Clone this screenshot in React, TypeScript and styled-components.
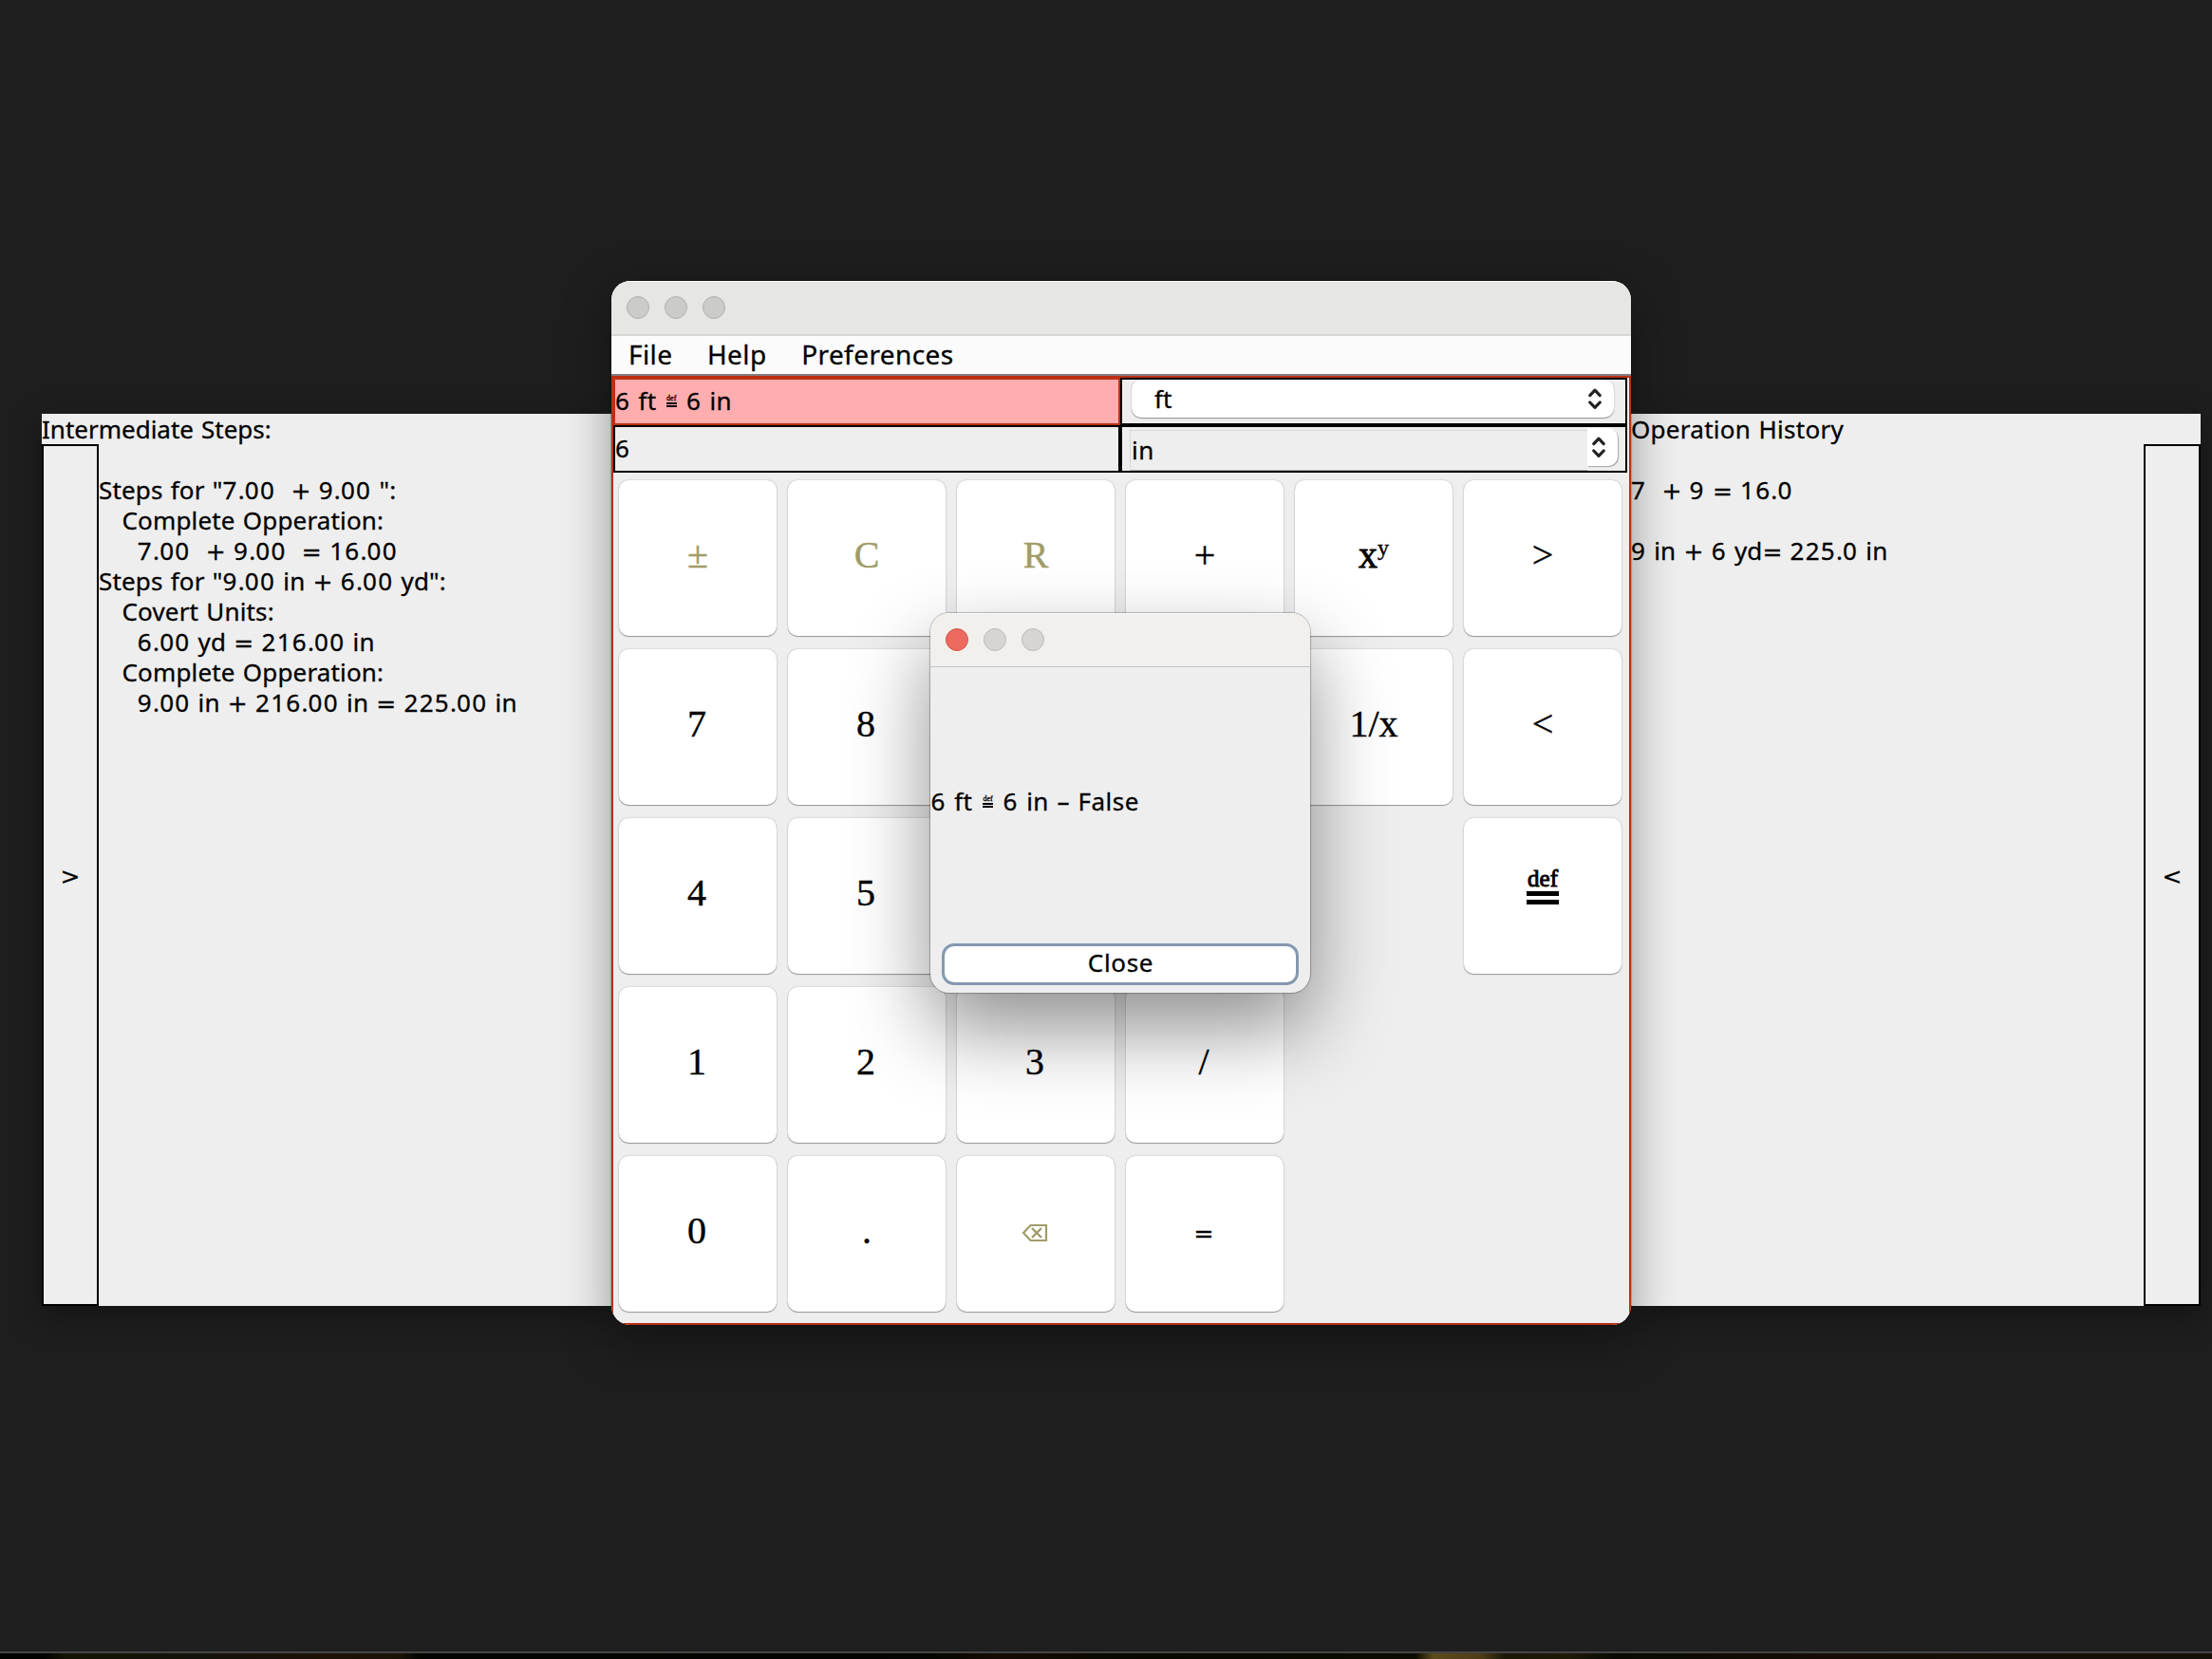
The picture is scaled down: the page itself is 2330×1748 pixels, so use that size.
import React from "react";
import styled, { createGlobalStyle, css } from "styled-components";

const GlobalStyle = createGlobalStyle`
  * { box-sizing: border-box; }
  html, body { margin: 0; padding: 0; background: #1e1e1e; }
  button { font: inherit; margin: 0; padding: 0; color: inherit; }
`;

const sans = `"Noto Sans", "Open Sans", sans-serif`;
const serif = `"Liberation Serif", "Times New Roman", serif`;
const olive = "#a09c68";
const rust = "#bb3114";

/* ---------- text ---------- */

const Label = styled.span<{ $size?: number; $track?: number }>`
  font-family: ${sans};
  font-size: ${(p) => p.$size ?? 26}px;
  line-height: 32px;
  letter-spacing: ${(p) => p.$track ?? 0.16}px;
  word-spacing: 1.25px;
  white-space: pre;
  color: #000;
  -webkit-text-stroke: 0.3px #000;
`;

const Digits = styled.span`
  letter-spacing: 1.25px;
`;

const Operator = styled.span`
  font-family: "DejaVu Sans", sans-serif;
  font-size: 25px;
  line-height: 0;
`;

const DefMark = styled.span<{ $large?: boolean }>`
  display: inline-flex;
  flex-direction: column;
  align-items: stretch;
  font-family: ${serif};
  letter-spacing: 0;
  text-align: center;
  ${(p) =>
    p.$large
      ? css`
          width: 34px;
          margin-bottom: 11px;
          font-size: 25px;
          line-height: 18px;
          -webkit-text-stroke: 0.9px #000;
        `
      : css`
          width: 11px;
          margin: 0 2px;
          font-size: 8px;
          line-height: 6px;
          vertical-align: 10px;
          -webkit-text-stroke: 0.3px #000;
        `}
`;

const DefBar = styled.i<{ $large?: boolean }>`
  height: ${(p) => (p.$large ? 5 : 2)}px;
  margin-top: ${(p) => (p.$large ? 4 : 1)}px;
  background: #000;
`;

const Def = ({ large }: { large?: boolean }) => (
  <DefMark $large={large}>
    def
    <DefBar $large={large} />
    <DefBar $large={large} />
  </DefMark>
);

const Text = ({ children }: { children: string }) => (
  <>
    {children.split(/([0-9]+|[+=<>]|≝)/).map((part, i) => {
      if (part === "≝") return <Def key={i} />;
      if (/^[0-9]+$/.test(part)) return <Digits key={i}>{part}</Digits>;
      if (/^[+=<>]$/.test(part)) return <Operator key={i}>{part}</Operator>;
      return part;
    })}
  </>
);

/* ---------- desktop ---------- */

const Desktop = styled.div`
  position: relative;
  width: 2330px;
  height: 1748px;
  overflow: hidden;
  display: flex;
  flex-direction: column;
  justify-content: flex-end;
  background: #1e1e1e;
`;

const WallpaperEdge = styled.div`
  height: 8px;
  border-top: 2px solid #454545;
  background: linear-gradient(
    90deg,
    #020200 0 2%,
    #151404 3%,
    #14120a 9%,
    #1d1206 15%,
    #1a1407 18%,
    #040500 19%,
    #050601 42%,
    #150c04 45%,
    #070800 52%,
    #0c0c02 64%,
    #5e4b1c 64.8%,
    #4c3c17 67%,
    #1c1808 68%,
    #1d1a08 71%,
    #0a0a03 73%,
    #150d05 82%,
    #151006 100%
  );
`;

const SidePanel = styled.section<{ $x: number }>`
  position: absolute;
  left: ${(p) => p.$x}px;
  top: 436px;
  width: 600px;
  height: 940px;
  display: flex;
  flex-direction: column;
  background: #eee;
  box-shadow: 0 10px 30px rgba(0, 0, 0, 0.35);
`;

const PanelBody = styled.div`
  flex: 1;
  display: flex;
`;

const Lines = styled.div`
  flex: 1;
  display: flex;
  flex-direction: column;
  padding-top: 32px;
`;

const Drawer = styled.button`
  width: 60px;
  display: flex;
  align-items: center;
  justify-content: center;
  border: 2px solid #000;
  background: #eee;
`;

/* ---------- windows ---------- */

const Frame = styled.section<{ $dialog?: boolean }>`
  position: absolute;
  display: flex;
  flex-direction: column;
  overflow: hidden;
  border-radius: 20px;
  background: #eee;
  ${(p) =>
    p.$dialog
      ? css`
          left: 980px;
          top: 646px;
          width: 400px;
          height: 400px;
          box-shadow: 0 0 1px 1px rgba(0, 0, 0, 0.25), 0 38px 84px rgba(0, 0, 0, 0.44);
        `
      : css`
          left: 644px;
          top: 296px;
          width: 1074px;
          height: 1100px;
          box-shadow: 0 0 1px 1px rgba(0, 0, 0, 0.2), 0 16px 50px rgba(0, 0, 0, 0.38);
        `}
`;

const TitleBar = styled.header<{ $dialog?: boolean }>`
  height: ${(p) => (p.$dialog ? 57 : 58)}px;
  flex: none;
  display: flex;
  gap: 16px;
  padding: 16px;
  background: ${(p) => (p.$dialog ? "#f1f0ec" : "#e6e6e4")};
  border-bottom: ${(p) => (p.$dialog ? "1px solid #c4c4c4" : "2px solid #d6d6d4")};
  box-shadow: inset 0 1px 0 #fbfbfa;
`;

const Light = styled.i<{ $tone: "red" | "grey" | "pale" }>`
  width: 24px;
  height: 24px;
  border-radius: 50%;
  ${(p) =>
    ({
      red: "background:#ec6a5e;border:1px solid #d5564b;",
      grey: "background:#cbcbc9;border:1px solid #b0b0ae;",
      pale: "background:#d6d5d3;border:1px solid #bbbab8;",
    })[p.$tone]}
`;

const MenuBar = styled.nav`
  height: 42px;
  flex: none;
  display: flex;
  align-items: center;
  gap: 36.5px;
  padding: 0 0 2px 18px;
  background: #fbfbfb;
  border-bottom: 2px solid #808080;
`;

const Content = styled.div`
  flex: 1;
  border: 2px solid ${rust};
`;

const Fields = styled.div`
  display: grid;
  grid-template-columns: 534px 534px;
  grid-template-rows: 50px 50px;
`;

const Field = styled.div<{ $alert?: boolean }>`
  display: flex;
  align-items: center;
  padding-bottom: 3px;
  border: 2px solid ${(p) => (p.$alert ? rust : "#000")};
  background: ${(p) => (p.$alert ? "#ffadaf" : "#eee")};
`;

const ComboCell = styled.div<{ $left: number; $top: number }>`
  display: flex;
  align-items: flex-start;
  padding: ${(p) => p.$top}px 0 0 ${(p) => p.$left}px;
  border: 2px solid #000;
`;

const Combo = styled.div`
  width: 508px;
  height: 40px;
  display: flex;
  align-items: center;
  justify-content: space-between;
  padding: 0 13px 0 24px;
  border-radius: 10px;
  background: #fff;
  box-shadow: 0 1px 1px rgba(0, 0, 0, 0.35), 0 0 2px rgba(0, 0, 0, 0.2);
`;

const ComboEdit = styled.div`
  width: 482px;
  height: 43px;
  display: flex;
  align-items: center;
  margin-top: 2px;
  padding: 0 0 2px 1px;
  border: 1px solid #d8d8d8;
  border-right: 0;
  border-bottom-color: #b2b2b2;
`;

const ComboButton = styled.button`
  width: 32px;
  height: 40px;
  display: flex;
  align-items: center;
  justify-content: flex-end;
  padding-right: 13px;
  border: 0;
  border-radius: 0 10px 10px 0;
  background: #fff;
  box-shadow: 1px 1px 1px rgba(0, 0, 0, 0.3);
`;

const Chevrons = () => (
  <svg width="14" height="24" viewBox="0 0 14 24" fill="none" stroke="#222" strokeWidth="3.2" strokeLinecap="round" strokeLinejoin="round">
    <path d="M1.8 8.6 7 3.2l5.2 5.4M1.8 16 7 21.4 12.2 16" />
  </svg>
);

const Keypad = styled.div`
  display: grid;
  grid-template-columns: repeat(6, 166px);
  grid-auto-rows: 164px;
  gap: 14px 12px;
  padding: 8px 0 0 6px;
`;

const Key = styled.button<{ $muted?: boolean; $nudge?: boolean; $heavy?: boolean }>`
  display: flex;
  align-items: center;
  justify-content: center;
  padding: 0 ${(p) => (p.$nudge ? 2 : 0)}px 7px 0;
  border: 0;
  border-radius: 10px;
  background: #fff;
  box-shadow: 0 1px 1px rgba(0, 0, 0, 0.32), 0 0 2px rgba(0, 0, 0, 0.26);
  font-family: ${serif};
  font-size: 40px;
  color: ${(p) => (p.$muted ? olive : "#000")};
  -webkit-text-stroke: ${(p) => (p.$heavy ? 0.8 : 0.4)}px currentColor;
`;

const Power = styled.span`
  font-size: 24px;
  line-height: 0;
  margin-bottom: 16px;
  -webkit-text-stroke-width: 0.4px;
`;

const KeyEquals = styled.span`
  font-family: "DejaVu Sans", sans-serif;
  font-size: 25px;
  padding-top: 6px;
`;

const Erase = () => (
  <svg width="28" height="20" viewBox="0 0 28 20" fill="none" stroke={olive} strokeWidth="2.2">
    <path d="M2 10 9.5 2H26v16H9.5Z" />
    <path d="M11 5l10 10M21 5 11 15" strokeWidth="2.4" />
  </svg>
);

const EraseWrap = styled.span`
  display: flex;
  padding-top: 4px;
`;

const DialogBody = styled.div`
  flex: 1;
  display: flex;
  flex-direction: column;
  padding-bottom: 8px;
`;

const Message = styled.div`
  flex: 1;
  display: flex;
  align-items: center;
  padding: 0 0 10px 0.5px;
`;

const CloseButton = styled.button`
  height: 44px;
  margin: 0 12px;
  border: 3px solid #8698b0;
  border-radius: 13px;
  background: #fff;
  display: flex;
  align-items: center;
  justify-content: center;
  padding: 0 0 5px 1px;
`;

const steps = [
  'Steps for "7.00  + 9.00 ":',
  "   Complete Opperation:",
  "     7.00  + 9.00  = 16.00",
  'Steps for "9.00 in + 6.00 yd":',
  "   Covert Units:",
  "     6.00 yd = 216.00 in",
  "   Complete Opperation:",
  "     9.00 in + 216.00 in = 225.00 in",
];

const history = ["7  + 9 = 16.0", " ", "9 in + 6 yd= 225.0 in"];

const keys: (string | null)[][] = [
  ["±", "C", "R", "+", "xy", ">"],
  ["7", "8", null, null, "1/x", "<"],
  ["4", "5", null, null, null, "≝"],
  ["1", "2", "3", "/", null, null],
  ["0", ".", "⌫", "=", null, null],
];

const face = (k: string) => {
  if (k === "xy") return <>x<Power>y</Power></>;
  if (k === "≝") return <Def large />;
  if (k === "⌫") return <EraseWrap><Erase /></EraseWrap>;
  if (k === "=") return <KeyEquals>=</KeyEquals>;
  return k;
};

export default function App() {
  return (
    <Desktop>
      <GlobalStyle />
      <SidePanel $x={44}>
        <Label $track={0}>Intermediate Steps:</Label>
        <PanelBody>
          <Drawer><Label><Text>{">"}</Text></Label></Drawer>
          <Lines>
            {steps.map((s, i) => (
              <Label key={i}><Text>{s}</Text></Label>
            ))}
          </Lines>
        </PanelBody>
      </SidePanel>
      <SidePanel $x={1718}>
        <Label $track={0.28}>Operation History</Label>
        <PanelBody>
          <Lines>
            {history.map((s, i) => (
              <Label key={i} $track={0.12}><Text>{s}</Text></Label>
            ))}
          </Lines>
          <Drawer><Label><Text>{"<"}</Text></Label></Drawer>
        </PanelBody>
      </SidePanel>

      <Frame>
        <TitleBar>
          <Light $tone="grey" />
          <Light $tone="grey" />
          <Light $tone="grey" />
        </TitleBar>
        <MenuBar>
          <Label $size={28} $track={0.42}>File</Label>
          <Label $size={28} $track={0.42}>Help</Label>
          <Label $size={28} $track={0.42}>Preferences</Label>
        </MenuBar>
        <Content>
          <Fields>
            <Field $alert><Label $track={0.3}><Text>6 ft ≝ 6 in</Text></Label></Field>
            <ComboCell $left={10} $top={0}>
              <Combo>
                <Label>ft</Label>
                <Chevrons />
              </Combo>
            </ComboCell>
            <Field><Label><Text>6</Text></Label></Field>
            <ComboCell $left={8} $top={1}>
              <ComboEdit><Label $track={0.5}>in</Label></ComboEdit>
              <ComboButton><Chevrons /></ComboButton>
            </ComboCell>
          </Fields>
          <Keypad>
            {keys.flat().map((k, i) =>
              k === null ? <span key={i} /> : (
                <Key
                  key={i}
                  $muted={"±CR⌫".includes(k)}
                  $nudge={/^[0-9/=⌫]$/.test(k)}
                  $heavy={k === "xy"}
                >
                  {face(k)}
                </Key>
              ),
            )}
          </Keypad>
        </Content>
      </Frame>

      <Frame $dialog>
        <TitleBar $dialog>
          <Light $tone="red" />
          <Light $tone="pale" />
          <Light $tone="pale" />
        </TitleBar>
        <DialogBody>
          <Message><Label $track={0.5}><Text>6 ft ≝ 6 in – False</Text></Label></Message>
          <CloseButton><Label $track={0.7}>Close</Label></CloseButton>
        </DialogBody>
      </Frame>

      <WallpaperEdge />
    </Desktop>
  );
}
